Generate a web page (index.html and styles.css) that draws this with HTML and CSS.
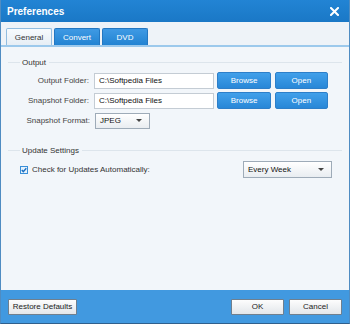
FILE: index.html
```html
<!DOCTYPE html>
<html lang="en">
<head>
    <meta charset="UTF-8">
    <title>Preferences</title>
    <link rel="stylesheet" href="styles.css">
</head>
<body>
    <div class="window">
        <!-- Title bar -->
        <div class="titlebar">
            <span class="title">Preferences</span>
            <svg class="close" width="9" height="9" viewBox="0 0 9 9">
                <path d="M1 1 L8 8 M8 1 L1 8" stroke="#fff" stroke-width="2" stroke-linecap="square"/>
            </svg>
        </div>

        <!-- Tabs -->
        <div class="tabs">
            <div class="tab active">General</div>
            <div class="tab">Convert</div>
            <div class="tab">DVD</div>
        </div>

        <!-- General panel -->
        <div class="panel">
            <div class="group"><span class="group-label">Output</span></div>

            <div class="row">
                <label class="field-label">Output Folder:</label>
                <div class="text-input">C:\Softpedia Files</div>
                <button class="blue-btn">Browse</button>
                <button class="blue-btn">Open</button>
            </div>
            <div class="row">
                <label class="field-label">Snapshot Folder:</label>
                <div class="text-input">C:\Softpedia Files</div>
                <button class="blue-btn">Browse</button>
                <button class="blue-btn">Open</button>
            </div>
            <div class="row">
                <label class="field-label">Snapshot Format:</label>
                <div class="select small">
                    <span>JPEG</span>
                    <span class="arrow"></span>
                </div>
            </div>

            <div class="group update"><span class="group-label">Update Settings</span></div>

            <div class="check-row">
                <svg class="checkbox" width="8" height="8" viewBox="0 0 8 8">
                    <rect x="0.5" y="0.5" width="7" height="7" fill="#e6f2fc" stroke="#3a8fd8"/>
                    <path d="M1.8 4 L3.3 5.6 L6.3 2.2" fill="none" stroke="#1c6fc0" stroke-width="1.4"/>
                </svg>
                <span class="check-label">Check for Updates Automatically:</span>
                <div class="select wide">
                    <span>Every Week</span>
                    <span class="arrow"></span>
                </div>
            </div>
        </div>

        <!-- Footer -->
        <div class="footer">
            <button class="gray-btn restore">Restore Defaults</button>
            <div class="footer-right">
                <button class="gray-btn">OK</button>
                <button class="gray-btn">Cancel</button>
            </div>
        </div>
    </div>
</body>
</html>
```

FILE: styles.css
```css
/* Base */
body {
    margin: 0;
    padding: 0;
    font-family: 'Liberation Sans', Arial, sans-serif;
    font-size: 8px;
    color: #333;
    background: #f2f6fa;
}

.window {
    width: 350px;
    height: 324px;
    box-sizing: border-box;
    border-left: 1px solid #4f8cc2;
    border-right: 1px solid #4f8cc2;
    border-bottom: 1px solid #2f5f8c;
    display: flex;
    flex-direction: column;
    overflow: hidden;
    background: #f2f6fa;
}

/* Title bar */
.titlebar {
    height: 22px;
    flex-shrink: 0;
    display: flex;
    align-items: center;
    justify-content: space-between;
    padding: 0 10px 0 6px;
    background: linear-gradient(#2284d4, #1a78c6);
}

.title {
    color: #fff;
    font-size: 10px;
    font-weight: bold;
}

/* Tabs */
.tabs {
    height: 25px;
    flex-shrink: 0;
    box-sizing: border-box;
    display: flex;
    align-items: flex-end;
    gap: 2px;
    padding: 0 0 0 5px;
    background: #eef3f8;
    border-bottom: 2px solid #9cc9ec;
}

.tab {
    width: 46px;
    height: 17px;
    box-sizing: border-box;
    display: flex;
    align-items: center;
    justify-content: center;
    color: #fff;
    border: 1px solid #2377c2;
    border-bottom: none;
    border-radius: 2px 2px 0 0;
    background: linear-gradient(#3f9ae4, #2283d2);
}

.tab.active {
    color: #333;
    background: linear-gradient(#f8fbfd, #e6eef5);
    border-color: #92bde0;
}

/* Panel */
.panel {
    flex: 1;
    padding: 10px 17px 0 7px;
    background: #f2f6fa;
}

.group {
    display: flex;
    align-items: center;
    height: 11px;
    margin-right: -10px;
    margin-bottom: 4px;
}

.group::before {
    content: "";
    width: 12px;
    height: 1px;
    margin-right: 2px;
    background: #dde5ec;
}

.group::after {
    content: "";
    flex: 1;
    height: 1px;
    margin-left: 3px;
    background: #dde5ec;
}

.group.update {
    margin-top: 16px;
    margin-bottom: 5px;
}

.group-label {
    color: #333;
}

.row {
    display: flex;
    align-items: center;
    height: 17px;
    margin-bottom: 3px;
}

.field-label {
    width: 82px;
    margin-right: 5px;
    text-align: right;
    color: #444;
}

.text-input {
    width: 122px;
    height: 16px;
    box-sizing: border-box;
    padding: 0 4px;
    line-height: 14px;
    color: #111;
    background: #fff;
    border: 1px solid #c4ccd4;
    margin-right: 3px;
}

.blue-btn {
    width: 54px;
    height: 17px;
    margin-right: 4px;
    padding: 0;
    font-family: inherit;
    font-size: 8px;
    color: #fff;
    border: 1px solid #2d7fc9;
    border-radius: 2px;
    background: linear-gradient(#41a0ea, #2887d7);
}

.select {
    height: 16px;
    box-sizing: border-box;
    display: flex;
    align-items: center;
    justify-content: space-between;
    padding: 0 7px 0 4px;
    color: #111;
    border: 1px solid #9eabb8;
    background: linear-gradient(#ffffff, #e9edf1);
}

.select.small {
    width: 55px;
}

.select.wide {
    width: 89px;
    height: 17px;
    margin-left: auto;
}

.arrow {
    width: 0;
    height: 0;
    border-left: 3px solid transparent;
    border-right: 3px solid transparent;
    border-top: 3px solid #444;
}

.check-row {
    display: flex;
    align-items: center;
    height: 17px;
    padding-left: 12px;
}

.checkbox {
    margin-right: 4px;
}

.check-label {
    color: #333;
}

/* Footer */
.footer {
    height: 33px;
    flex-shrink: 0;
    box-sizing: border-box;
    display: flex;
    align-items: center;
    justify-content: space-between;
    padding: 0 7px 0 7px;
    background: #4199e0;
}

.footer-right {
    display: flex;
    gap: 5px;
}

.gray-btn {
    width: 53px;
    height: 16px;
    padding: 0;
    font-family: inherit;
    font-size: 8px;
    color: #222;
    border: 1px solid #6f7f8e;
    border-radius: 1px;
    background: linear-gradient(#fdfdfd, #e2e6ea);
}

.gray-btn.restore {
    width: 69px;
}
```
